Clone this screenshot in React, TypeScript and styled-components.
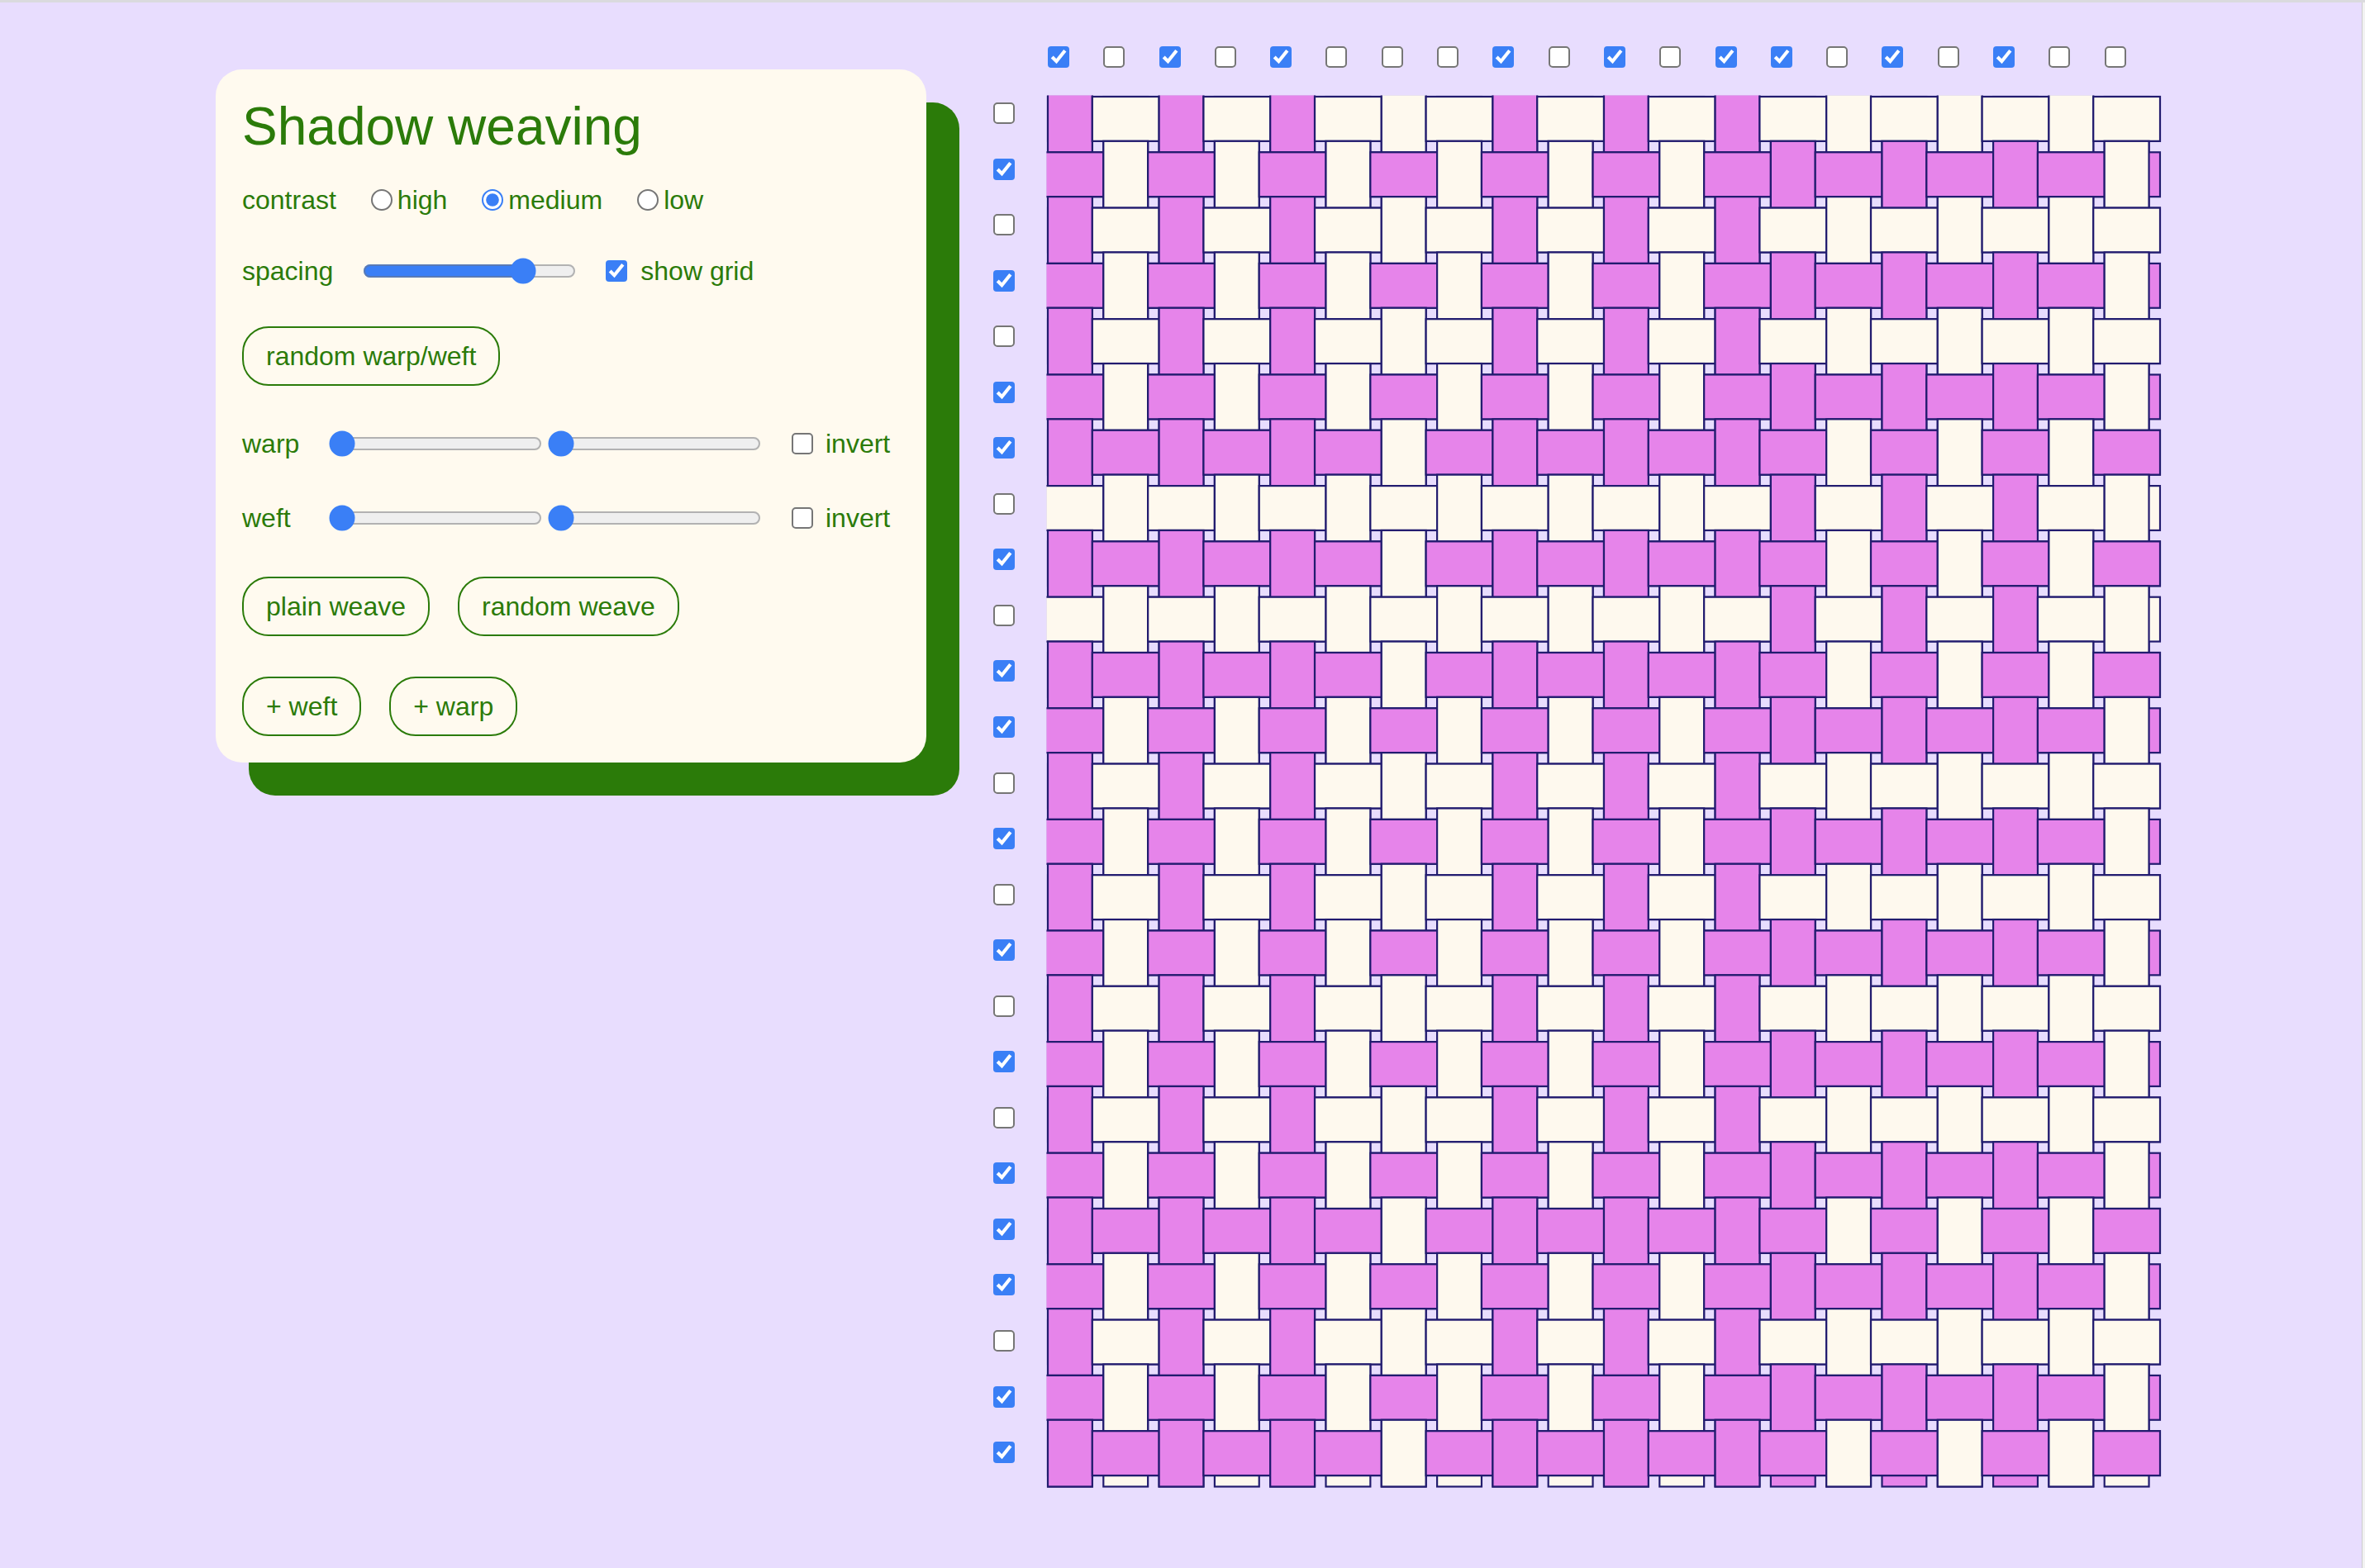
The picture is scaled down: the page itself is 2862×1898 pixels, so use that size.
import React from "react";
import styled, { createGlobalStyle } from "styled-components";

const GREEN = "#2b7b09";
const LAVENDER = "#e8ddfe";
const PANEL = "#fffaef";
const PINK = "#e684ea";
const THREAD = "#fef9ee";
const NAVY = "#221c6f";
const ACCENT = "#3a7ff6";

const WARP = [1, 0, 1, 0, 1, 0, 0, 0, 1, 0, 1, 0, 1, 1, 0, 1, 0, 1, 0, 0].map(Boolean);
const WEFT = [0, 1, 0, 1, 0, 1, 1, 0, 1, 0, 1, 1, 0, 1, 0, 1, 0, 1, 0, 1, 1, 1, 0, 1, 1].map(Boolean);
const P = 67.3;
const T = P * 0.8;
const G = P - T;
const W = P * WARP.length;
const H = P * WEFT.length;

const GlobalStyle = createGlobalStyle`
  html, body { margin: 0; padding: 0; background: ${LAVENDER}; }
  body { font-family: "Liberation Sans", Arial, Helvetica, sans-serif; }
`;

const Page = styled.div`
  box-sizing: border-box;
  min-height: 100vh;
  display: flex;
  background: ${LAVENDER};
  border-top: 3px solid #dadade;
`;

const Main = styled.main`
  flex: 1;
  display: flex;
  align-items: flex-start;
  padding-left: 261px;
`;

const ScrollEdge = styled.div`
  width: 3px;
  border-left: 1px solid #cdcdcd;
  background: #f2f2f2;
`;

const Panel = styled.section`
  box-sizing: border-box;
  width: 860px;
  margin-top: 81px;
  padding: 33px 32px 32px 32px;
  background: ${PANEL};
  border-radius: 32px;
  box-shadow: 40px 40px 0 0 ${GREEN};
  color: ${GREEN};
  font-size: 32px;
  display: flex;
  flex-direction: column;
  align-items: flex-start;
`;

const Title = styled.h1`
  margin: 0;
  font-size: 64px;
  font-weight: 400;
  line-height: 72px;
`;

const Row = styled.div<{ $top: number; $gap?: number }>`
  display: flex;
  align-items: center;
  height: 40px;
  margin-top: ${(p) => p.$top}px;
  gap: ${(p) => p.$gap ?? 0}px;
`;

const Text = styled.span`
  line-height: normal;
  white-space: nowrap;
`;

const FieldName = styled(Text)<{ $width?: number }>`
  ${(p) => (p.$width ? `width: ${p.$width}px;` : "")}
`;

const Option = styled.label<{ $gap: number }>`
  display: inline-flex;
  align-items: center;
  gap: ${(p) => p.$gap}px;
`;

const Radio = styled.input.attrs({ type: "radio" })`
  zoom: 2;
  margin: 0;
  accent-color: ${ACCENT};
`;

const Check = styled.input.attrs({ type: "checkbox" })`
  zoom: 2;
  margin: 0;
  accent-color: ${ACCENT};
`;

const Range = styled.input.attrs({ type: "range" })`
  zoom: 2;
  margin: 0;
  accent-color: ${ACCENT};
`;

const RangePair = styled.div`
  display: flex;
  align-items: center;
  gap: 7px;
`;

const ButtonRow = styled.div<{ $top: number }>`
  display: flex;
  gap: 34px;
  margin-top: ${(p) => p.$top}px;
`;

const Pill = styled.button`
  box-sizing: border-box;
  height: 72px;
  padding: 0 27px;
  border: 2px solid ${GREEN};
  border-radius: 32px;
  background: transparent;
  color: ${GREEN};
  font-family: inherit;
  font-size: 32px;
  line-height: normal;
  cursor: pointer;
`;

const Loom = styled.div`
  display: grid;
  grid-template-columns: 66px auto;
  grid-template-rows: 61px auto;
  margin-left: 81px;
  margin-top: 53px;
`;

const TopChecks = styled.div`
  grid-column: 2;
  grid-row: 1;
  display: flex;
  align-items: flex-start;
`;

const ColCell = styled.div`
  width: ${P}px;
  flex: none;
  display: flex;
  align-items: flex-start;
`;

const LeftChecks = styled.div`
  grid-column: 1;
  grid-row: 2;
  display: flex;
  flex-direction: column;
`;

const RowCell = styled.div`
  height: 67.55px;
  flex: none;
  box-sizing: border-box;
  padding-top: 7px;
  display: flex;
  align-items: flex-start;
`;

const Cloth = styled.svg`
  grid-column: 2;
  grid-row: 2;
  display: block;
  overflow: visible;
`;

function Weave() {
  const color = (pink: boolean) => (pink ? PINK : THREAD);
  const under: React.ReactNode[] = [];
  WARP.forEach((pink, c) =>
    under.push(<rect key={`uw${c}`} x={c * P} y={0} width={T} height={H} fill={color(pink)} />)
  );
  WEFT.forEach((pink, r) =>
    under.push(<rect key={`uf${r}`} x={0} y={r * P} width={W} height={T} fill={color(pink)} />)
  );
  const over: React.ReactNode[] = [];
  WEFT.forEach((weftPink, r) => {
    WARP.forEach((warpPink, c) => {
      if ((r + c) % 2 === 0) {
        over.push(
          <rect key={`o${r}-${c}`} x={c * P} y={r * P - G} width={T} height={T + 2 * G} fill={color(warpPink)} />
        );
      } else {
        over.push(
          <rect key={`o${r}-${c}`} x={c * P - G} y={r * P} width={T + 2 * G} height={T} fill={color(weftPink)} />
        );
      }
    });
  });
  return (
    <Cloth width={W} height={H} viewBox={`0 0 ${W} ${H}`}>
      <defs>
        <clipPath id="loom-clip">
          <rect x={-1.5} y={-1.5} width={W + 3} height={H + 3} />
        </clipPath>
      </defs>
      <g clipPath="url(#loom-clip)" stroke={NAVY} strokeWidth={2.2}>
        {under}
        {over}
      </g>
    </Cloth>
  );
}

export default function App() {
  return (
    <>
      <GlobalStyle />
      <Page>
        <Main>
          <Panel>
            <Title>Shadow weaving</Title>
            <Row $top={33} $gap={42}>
              <FieldName>contrast</FieldName>
              <Option $gap={6}>
                <Radio name="contrast" />
                <Text>high</Text>
              </Option>
              <Option $gap={6}>
                <Radio name="contrast" defaultChecked />
                <Text>medium</Text>
              </Option>
              <Option $gap={6}>
                <Radio name="contrast" />
                <Text>low</Text>
              </Option>
            </Row>
            <Row $top={46} $gap={36}>
              <FieldName>spacing</FieldName>
              <Range min={0} max={1} step={0.005} defaultValue={0.785} />
              <Option $gap={16}>
                <Check defaultChecked />
                <Text>show grid</Text>
              </Option>
            </Row>
            <ButtonRow $top={47}>
              <Pill>random warp/weft</Pill>
            </ButtonRow>
            <Row $top={50} $gap={37}>
              <RangePair>
                <FieldName $width={98}>warp</FieldName>
                <Range min={0} max={1} step={0.01} defaultValue={0} />
                <Range min={0} max={1} step={0.01} defaultValue={0} />
              </RangePair>
              <Option $gap={15}>
                <Check />
                <Text>invert</Text>
              </Option>
            </Row>
            <Row $top={50} $gap={37}>
              <RangePair>
                <FieldName $width={98}>weft</FieldName>
                <Range min={0} max={1} step={0.01} defaultValue={0} />
                <Range min={0} max={1} step={0.01} defaultValue={0} />
              </RangePair>
              <Option $gap={15}>
                <Check />
                <Text>invert</Text>
              </Option>
            </Row>
            <ButtonRow $top={51}>
              <Pill>plain weave</Pill>
              <Pill>random weave</Pill>
            </ButtonRow>
            <ButtonRow $top={49}>
              <Pill>+ weft</Pill>
              <Pill>+ warp</Pill>
            </ButtonRow>
          </Panel>
          <Loom>
            <TopChecks>
              {WARP.map((on, c) => (
                <ColCell key={c}>
                  <Check defaultChecked={on} />
                </ColCell>
              ))}
            </TopChecks>
            <LeftChecks>
              {WEFT.map((on, r) => (
                <RowCell key={r}>
                  <Check defaultChecked={on} />
                </RowCell>
              ))}
            </LeftChecks>
            <Weave />
          </Loom>
        </Main>
        <ScrollEdge />
      </Page>
    </>
  );
}
